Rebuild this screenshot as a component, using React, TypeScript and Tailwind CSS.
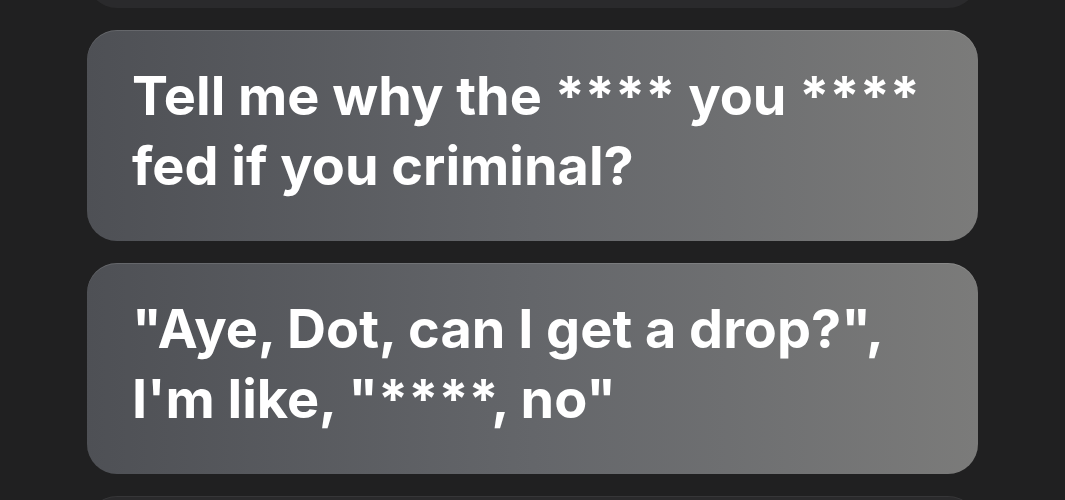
import React from 'react';

const lyrics = [
  { lines: ['', ''], partial: true },
  { lines: ['Tell me why the **** you ****', 'fed if you criminal?'] },
  { lines: ['"Aye, Dot, can I get a drop?",', 'I\'m like, "****, no"'] },
  { lines: ['', ''], partial: true },
];

const App = () => {
  return (
    <div
      className="h-[500px] w-[1065px] overflow-hidden bg-[#202021]"
      style={{ fontFamily: 'Inter, "Noto Sans", sans-serif' }}
    >
      <div className="mt-[-203px] flex flex-col gap-[22px] px-[87px]">
        {lyrics.map((card, i) =>
          card.partial ? (
            <div
              key={i}
              className="h-[211px] rounded-[30px] bg-[#2a2a2c] shadow-[inset_0_1px_0_rgba(255,255,255,0.06)]"
            />
          ) : (
            <div
              key={i}
              className="h-[211px] rounded-[30px] bg-gradient-to-r from-[#4e5055] via-[#64666a] to-[#7b7b7a] px-[45px] pt-[31px] shadow-[inset_0_1px_0_rgba(255,255,255,0.12)]"
            >
              {card.lines.map((line) => (
                <div
                  key={line}
                  className="whitespace-nowrap text-[54px] font-bold leading-[70px] text-white"
                >
                  {line}
                </div>
              ))}
            </div>
          )
        )}
      </div>
    </div>
  );
};

export default App;
